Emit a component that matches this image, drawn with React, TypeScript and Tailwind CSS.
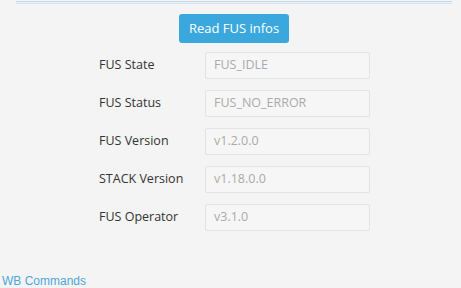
import React from "react";

const fields = [
  { label: "FUS State", value: "FUS_IDLE" },
  { label: "FUS Status", value: "FUS_NO_ERROR" },
  { label: "FUS Version", value: "v1.2.0.0" },
  { label: "STACK Version", value: "v1.18.0.0" },
  { label: "FUS Operator", value: "v3.1.0" },
];

export default function App() {
  return (
    <div className="w-[461px] h-[288px] overflow-hidden bg-[#f4f4f4] font-['Open_Sans',sans-serif]">
      <div className="mx-[16px] w-[436px] pt-[1px]">
        <div className="h-[1px] bg-[#c9d6e2]" />
        <div className="h-[1px] bg-[#eef3f7]" />
        <div className="h-[1px] bg-[#cde6f3]" />
      </div>

      <div className="mx-[16px] w-[436px] flex flex-col items-center pt-[10px]">
        <button
          type="button"
          className="w-[110px] h-[29px] rounded-[3px] bg-[#3aa8dc] text-white text-[13px] leading-none"
        >
          Read FUS infos
        </button>
      </div>

      <div className="flex flex-col gap-[11px] pt-[9px] pl-[99px]">
        {fields.map((f) => (
          <div key={f.label} className="flex items-center h-[27px]">
            <span className="w-[106px] text-[12.5px] text-[#333]">{f.label}</span>
            <div className="w-[165px] h-[27px] flex items-center pl-[8px] border border-[#e3e3e3] rounded-[2px] bg-[#f6f6f6] text-[12.5px] text-[#aaaaaa]">
              {f.value}
            </div>
          </div>
        ))}
      </div>

      <div className="pt-[41px] pl-[2px] text-[12px] text-[#4fa6d8] font-['Liberation_Sans',sans-serif]">
        WB Commands
      </div>
    </div>
  );
}
